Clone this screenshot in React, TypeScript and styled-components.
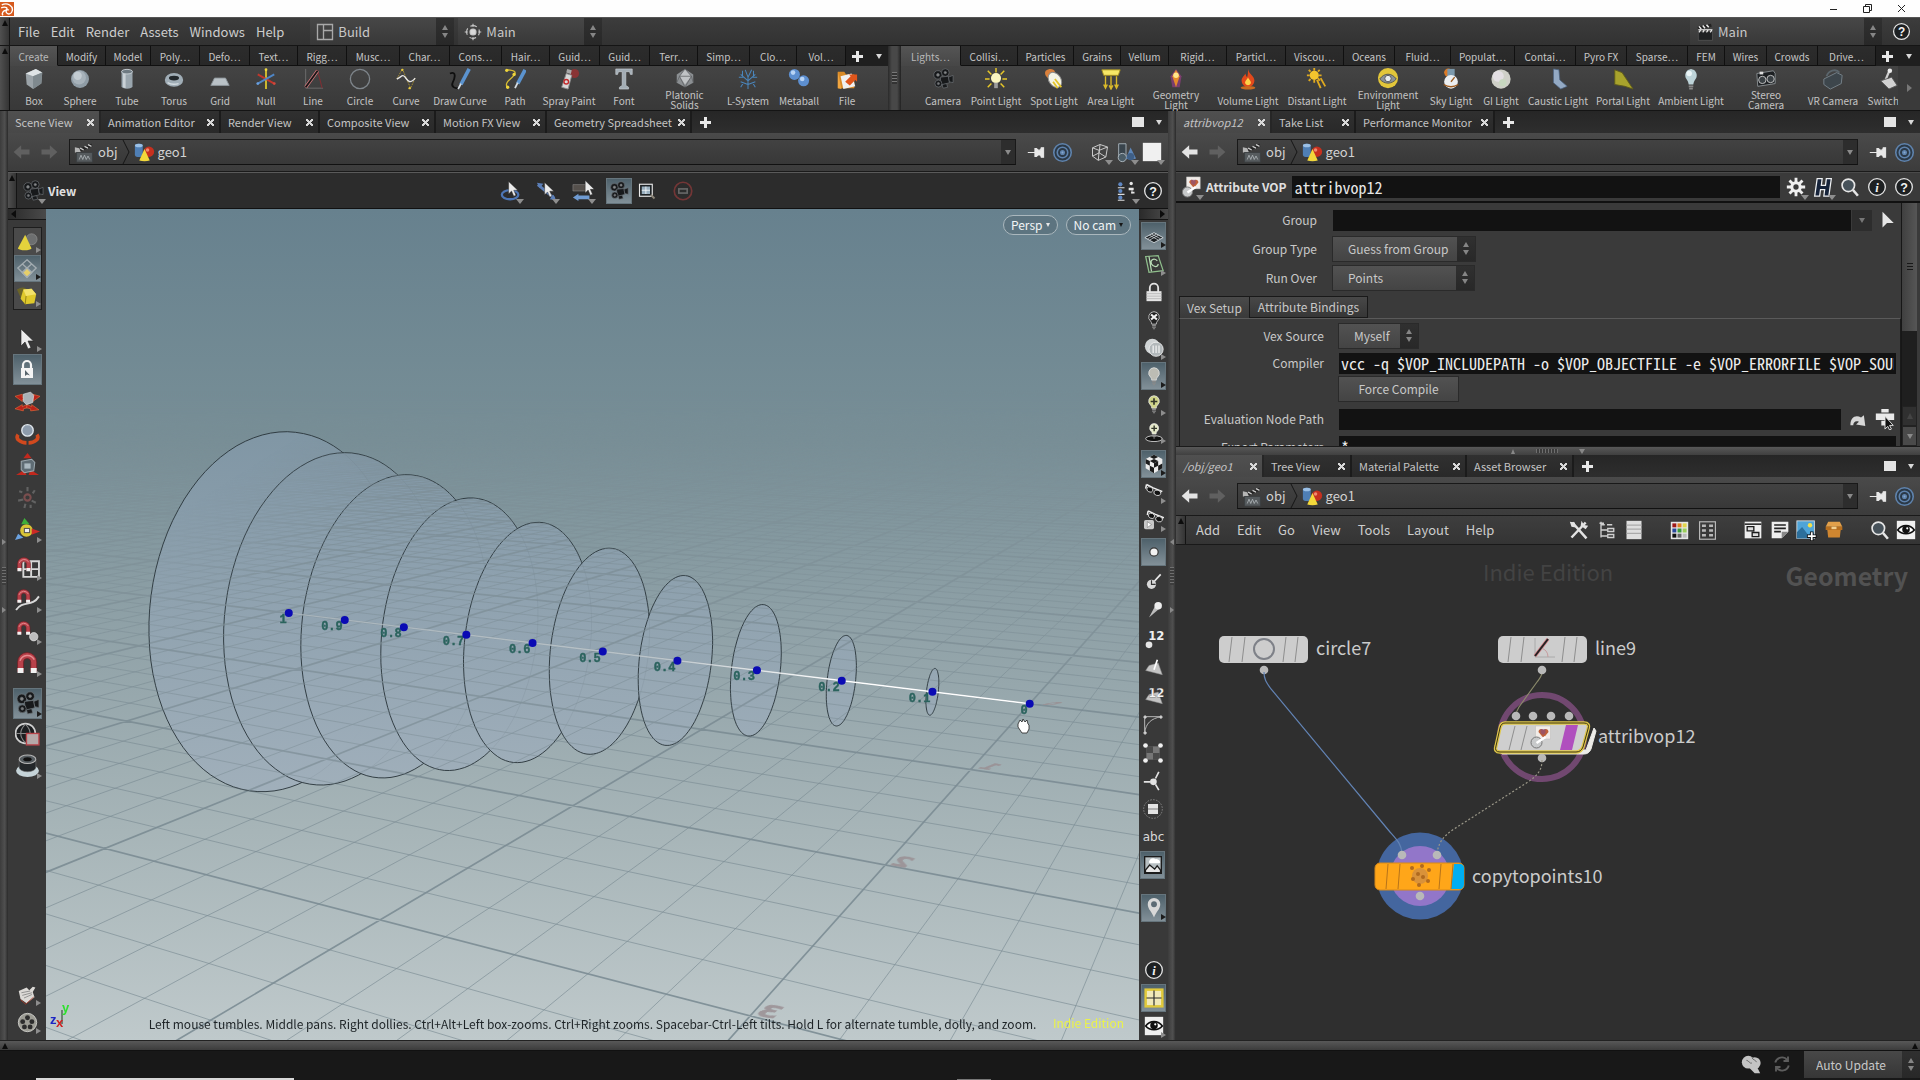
import React from "react";
import styled, { createGlobalStyle, css } from "styled-components";

const SANS = `"Noto Sans CJK SC", "Noto Sans CJK JP", "Open Sans", sans-serif`;
const MONO = `"Noto Sans Mono CJK SC", "Noto Sans Mono CJK JP", "DejaVu Sans Mono", monospace`;

const Global = createGlobalStyle`
  * { box-sizing: border-box; }
  body { margin: 0; background: #181818; color: #c8c8c8; font-family: ${SANS}; font-size: 13px; line-height: 20px; overflow: hidden; }
  button, input, select { font: inherit; color: inherit; margin: 0; padding: 0; border: 0; background: none; border-radius: 0; outline: 0; }
  a { color: inherit; text-decoration: none; }
  svg { display: block; flex: none; }
`;

/* ---------- icons ---------- */

const D = "#3a3a3a";
const camera = (
  <g fill="#17191b" stroke="#70767a" strokeWidth=".7">
    <circle cx="6.500" cy="7.500" r="4.600" /><circle cx="14.500" cy="5" r="4.200" />
    <path d="M9 10l9-1 1 7-9 3z" /><path d="M18 10l5-2v8l-4-1z" />
    <circle cx="7" cy="17" r="3.800" /><path d="M11 18l5-1 1 4-5 1z" /><circle cx="6.500" cy="7.500" r="1.500" fill="#888" /><circle cx="14.500" cy="5" r="1.300" fill="#888" /><circle cx="7" cy="17" r="1.200" fill="#777" />
  </g>
);
const magnet = (
  <g>
    <path d="M3 19V11a8 8 0 0 1 16 0v8h-5v-8a3 3 0 0 0-6 0v8z" fill="#b8414a" stroke="#6e1c22" strokeWidth=".6" />
    <path d="M5 10a6.500 6.500 0 0 1 12-1" fill="none" stroke="#e58a8e" strokeWidth="1.200" />
    <path d="M3 16h5v4H3zM14 16h5v4h-5z" fill="#f2f2f2" />
  </g>
);
const bulb = (fill: string, extra?: React.ReactNode) => (
  <g>
    <path d="M12 2a6.500 6.500 0 0 0-4 11.500c1 1 1 2 1.300 3.500h5.400c.3-1.500.3-2.500 1.300-3.500A6.500 6.500 0 0 0 12 2z" fill={fill} stroke="#e6e6e6" strokeWidth=".9" />
    <path d="M9.700 18.500h4.600M9.700 20.500h4.600M10.700 22.500h2.600" stroke="#8a8a8a" strokeWidth="1.400" />
    {extra}
  </g>
);
const pointer = <path d="M8 2v17l4-4 3 7 3-1.300-3-6.700h5.500z" fill="#ececec" stroke="#222" strokeWidth=".6" />;
const wedge = <path d="M6 1v21l6-6h9z" fill="#e6e6e6" />;
const glasses = (
  <g>
    <path d="M3 3l8 4 10 4-2 2M3 3l-1 5" stroke="#f0f0f0" strokeWidth="1.800" fill="none" />
    <ellipse cx="7" cy="9" rx="3.800" ry="3" fill="#111" stroke="#ddd" transform="rotate(25 7 9)" />
    <ellipse cx="16" cy="13" rx="4.200" ry="3.200" fill="#111" stroke="#ddd" transform="rotate(15 16 13)" />
  </g>
);
const redArrows = (
  <g fill="#b9231a" stroke="#e36a3a" strokeWidth=".6">
    <path d="M0 7l7-2v3l4-1v3l-4 0v2z" /><path d="M24 7l-7-2v3l-4-1v3l4 0v2z" />
    <path d="M0 19l7-4v2l4-2 1 3-4 1v2z" /><path d="M23 20l-7-5v2l-4-2-1 3 4 1v2z" />
  </g>
);
const info = (ch: string, italic?: boolean) => (
  <g>
    <circle cx="12" cy="12" r="10" fill="#1d2022" stroke="#e4e4e4" strokeWidth="1.600" />
    <text x="12" y="17.500" textAnchor="middle" fontSize="15" fontWeight="700" fontStyle={italic ? "italic" : "normal"} fontFamily={italic ? "Liberation Serif, serif" : "Liberation Sans, sans-serif"} fill="#f2f2f2">{ch}</text>
  </g>
);
const pane = (fill: string) => <path d="M6 9l11-3 5 14-20-5z" fill={fill} stroke="#8b8b8b" strokeWidth=".6" />;

const ICONS: Record<string, React.ReactNode> = {
  houdini: (
    <g>
      <rect width="24" height="24" fill="#d65a1e" />
      <path d="M3 5c10-5 20 2 18 10-1 6-8 7-10 3s2-6 4-4" fill="none" stroke="#fff" strokeWidth="2.400" />
      <path d="M2 10c8-3 13 1 8 4-4 1-8 5-5 9" fill="none" stroke="#fff" strokeWidth="2.400" />
    </g>
  ),
  layout: <path d="M2 2h20v20H2zM10 2v20M10 10h12M10 22" fill="none" stroke="#a8a8a8" strokeWidth="1.800" />,
  radial: (
    <g fill="none" stroke="#c8c8c8" strokeWidth="1.500">
      <circle cx="12" cy="12" r="8.500" strokeDasharray="9 4.300" strokeDashoffset="4.500" /><circle cx="12" cy="12" r="4" fill="#d8d8d8" />
      <path d="M12 1v4M12 19v4M1 12h4M19 12h4" />
    </g>
  ),
  clapper: (
    <g>
      <rect x="3" y="11" width="19" height="12" fill="#1f2123" stroke="#555" />
      <path d="M2 5l18-4 1 4L3 9z" fill="#222" /><path d="M4 4.500l3 3.500M9 3.400l3 3.500M14 2.300l3 3.500" stroke="#eee" strokeWidth="2" />
      <path d="M3 9h19M6 9.500l-2 3M11 9.500l-2 3M16 9.500l-2 3M21 9.500l-2 3" stroke="#eee" strokeWidth="1.500" />
    </g>
  ),
  objnet: (
    <g>
      <path d="M3 9L20 2l1 3L4 12z" fill="#222" /><path d="M7 7l4 2M12 5l4 2M16 3l4 2" stroke="#ccc" strokeWidth="1.400" />
      <path d="M1 6l5 1 2 5H1z" fill="#b5b5b5" /><rect x="3" y="12" width="18" height="11" fill="#565b5e" stroke="#3c3f41" />
      <path d="M6 20l2-5 2 5 2-5 2 5 2-4 2 4" stroke="#aab0b4" fill="none" />
    </g>
  ),
  shapes: (
    <g>
      <rect x="1" y="2" width="9" height="15" rx="3" fill="#4f7fb5" /><ellipse cx="5.500" cy="4" rx="4.500" ry="2" fill="#9bc0e6" />
      <circle cx="17" cy="11" r="6" fill="#c5301f" /><circle cx="15.500" cy="9" r="2" fill="#f08a70" />
      <path d="M12 8l6 13a9 3 0 0 1-12 0z" fill="#f3d83b" />
    </g>
  ),
  back: <path d="M2 12l9-8v5h10v6H11v5z" fill="currentColor" />,
  fwd: <path d="M22 12l-9-8v5H3v6h10v5z" fill="currentColor" />,
  pin: <path d="M1 12h9M10 7v10h2l2-2h3l1 3h3V6h-3l-1 3h-3l-2-2z" fill="#e8e8e8" stroke="#e8e8e8" strokeWidth="1.300" />,
  target: (
    <g fill="none" stroke="#5f83ad" strokeWidth="1.800">
      <circle cx="12" cy="12" r="10" fill="#2b3947" /><circle cx="12" cy="12" r="6" /><circle cx="12" cy="12" r="2" fill="#86a8cc" />
    </g>
  ),
  wirecube: <path d="M3 7l9-4 9 3-2 12-9 4-7-5zM3 7l8 3 10-4M11 10l-1 12M12 3l-1 10-8 4M11 13l8 5" fill="none" stroke="#c9c9c9" strokeWidth="1.200" />,
  spheres: (
    <g>
      <path d="M4 3h8v14H4z" fill="#39444c" stroke="#a9b4bb" /><circle cx="8" cy="18" r="4.500" fill="#4b5c66" stroke="#b3bdc4" />
      <path d="M17 7l6 12a8 3 0 0 1-11 0z" fill="#5d86b8" /><circle cx="17" cy="17" r="4" fill="#3f5f86" />
    </g>
  ),
  square: <rect x="1" y="1" width="22" height="22" fill="#f0f0f0" />,
  box: <g><path d="M3 6l11-5 7 4-1 12-9 6-7-5z" fill="#9ba3a8" /><path d="M3 6l8 3 10-4-7-4z" fill="#dfe4e6" /><path d="M11 9l0 14 9-6 1-12z" fill="#7f898e" /></g>,
  sphere: <g><circle cx="12" cy="12" r="9.800" fill="#8f9ca5" /><circle cx="11" cy="10.500" r="7.500" fill="#a7b2ba" /><circle cx="9.500" cy="8.500" r="4.500" fill="#c3ccd2" /></g>,
  tube: <g><path d="M6 4v16a6 2.500 0 0 0 12 0V4z" fill="#9aa6ae" /><path d="M7.500 5v16l3 1V5z" fill="#c9d1d6" /><ellipse cx="12" cy="4" rx="6" ry="2.500" fill="#6e7a82" stroke="#c9d1d6" /></g>,
  torus: <g><ellipse cx="12" cy="13" rx="10" ry="7.500" fill="#a0adb6" /><ellipse cx="12" cy="11" rx="5.500" ry="2.500" fill="#22282c" /><path d="M5 16a9 4 0 0 0 12 1" stroke="#d5dde2" fill="none" strokeWidth="1.500" /></g>,
  grid: <path d="M6 11h12l4 8H2z" fill="#b9c1c6" stroke="#8d969b" />,
  null: <g strokeWidth="2"><path d="M12 1v22" stroke="#d8c22e" /><path d="M3 7l18 10" stroke="#c2362c" /><path d="M21 7L3 17" stroke="#4f86c6" /><circle cx="12" cy="1.800" r="1.500" fill="#f0da40" /><circle cx="3" cy="17" r="1.500" fill="#6aa0e0" /><circle cx="21" cy="17" r="1.500" fill="#d0483c" /></g>,
  line: <g><path d="M4 1v21h19" stroke="#6e6e6e" fill="none" /><path d="M4 21L17 3l5 19" stroke="#7d2f33" fill="none" strokeWidth="1.200" /><path d="M4 21L17 3" stroke="#d77a7e" strokeWidth="3.600" /><path d="M4 21L17 3" stroke="#161616" strokeWidth="2" /></g>,
  circle: <circle cx="12" cy="12" r="10.500" fill="none" stroke="#7e858b" strokeWidth="1.400" />,
  curve: <g fill="none"><path d="M2 12L8 1l9 21 5-11" stroke="#a88f33" strokeDasharray="2 1" /><path d="M2 12c5-2 6-6 9-2s5 8 11 1" stroke="#e6e6e6" strokeWidth="1.500" /><circle cx="8" cy="2" r="1.300" fill="#e8c93a" /><circle cx="16" cy="22" r="1.300" fill="#e8c93a" /></g>,
  drawcurve: <g fill="none"><path d="M1 6c8-3 5 6 3 10s2 7 8 6" stroke="#0f0f0f" strokeWidth="2" /><path d="M22 1L13 18" stroke="#5b93cf" strokeWidth="4" /><path d="M13 17l-3 6" stroke="#d5dce2" strokeWidth="2" /></g>,
  path: <g fill="none"><path d="M3 2c9 0 12 3 6 8s-8 8-5 12" stroke="#d6bb32" strokeWidth="1.400" /><path d="M23 2l-8 15" stroke="#5b93cf" strokeWidth="4" /><path d="M15 16l-3 6" stroke="#d5dce2" strokeWidth="2" /><g fill="#f0d63c"><circle cx="3" cy="2.500" r="1.800" /><circle cx="11" cy="7" r="1.800" /><circle cx="4" cy="21" r="1.800" /></g></g>,
  spray: <g><circle cx="18" cy="6" r="5" fill="#c4282a" opacity=".55" /><path d="M9 6l6 2-4 15-7-2z" fill="#d8d8d8" stroke="#8b8b8b" /><path d="M10 1l5 1.500-1 4-5-1.500z" fill="#a9a9a9" /><circle cx="9" cy="15" r="2.500" fill="none" stroke="#c4282a" strokeWidth="1.500" /></g>,
  font: <path d="M3 1h18v6h-2l-1-3h-4v15l3 2v2H7v-2l3-2V4H6L5 7H3z" fill="#a3adb5" stroke="#d5dbe0" strokeWidth=".6" />,
  platonic: <g><path d="M12 1l9 6v9l-9 5-9-5V7z" fill="#8b8f92" /><path d="M12 1L6 9l6 9 7-9z" fill="#c0c3c5" /><path d="M12 1L6 9h13zM6 9l6 12 7-12M3 16l3-7M21 16l-2-7" fill="none" stroke="#5c5f61" strokeWidth=".8" /></g>,
  lsystem: <path d="M12 23V9M12 14L4 7M12 14l8-7M12 10L9 2M12 10l4-8M7 10H2M17 10h5M12 18l-8-3M12 18l8-3M6 8.500L6 3M18 8.500V3M7 16l-3 5M17 16l3 5" stroke="#4a86bd" strokeWidth="1.100" fill="none" />,
  metaball: <g><circle cx="7" cy="7" r="6" fill="#5d8fd0" /><circle cx="17" cy="14" r="6" fill="#5d8fd0" /><circle cx="5.500" cy="5" r="2.500" fill="#b7d3f5" /><circle cx="15.500" cy="12" r="2.500" fill="#b7d3f5" /></g>,
  file: <g><path d="M2 4h7l2 3h9v15H2z" fill="#d98a26" /><path d="M5 9l12-3 4 14-13 3z" fill="#f0f0f0" /><path d="M2 4l4 19-4-1z" fill="#f2a640" /><path d="M10 15l6-6-2-2h9v8l-2-2-6 6z" fill="#e0551b" /></g>,
  camera,
  pointlight: <g><g stroke="#e8c828" strokeWidth="1.600"><path d="M12 0v5M0 12h5M19 12h5M3 3l4 4M21 3l-4 4M3 21l4-4M21 21l-4-4" /></g><circle cx="12" cy="11" r="5.500" fill="#fbf6c0" /><rect x="10" y="16" width="4" height="6" fill="#9b9b9b" /></g>,
  spotlight: <g><path d="M3 3c4-3 9-2 10 1l-6 8C3 10 1 6 3 3z" fill="#d9803c" /><ellipse cx="13" cy="13" rx="6.500" ry="9" fill="#f4f3e4" stroke="#8b8b8b" transform="rotate(-35 13 13)" /><path d="M13 12l7 9M11 15l5 7" stroke="#e3c32a" strokeWidth="2" /></g>,
  arealight: <g><path d="M2 2h20l-2 6H4z" fill="#f6e766" stroke="#a89220" /><path d="M6 9v12M12 9v13M18 9v12M4 18l2 4 2-4M10 19l2 4 2-4M16 18l2 4 2-4" stroke="#d9b92a" strokeWidth="1.500" fill="none" /></g>,
  geolight: <g><path d="M12 1l6 8-2 12H8L6 9z" fill="#8a3d7a" opacity=".8" /><path d="M12 2l4 7-4 12-4-12z" fill="#e58b2a" /><circle cx="12" cy="8" r="3" fill="#ffe58a" /></g>,
  volumelight: <g><path d="M12 1c1 6 7 7 7 13a7 7 0 0 1-14 0c0-4 3-5 4-8 1 2 1 3 2 4 1-3 1-5 1-9z" fill="#e2491b" /><path d="M12 10c1 3 4 4 3 7a3.500 3.500 0 0 1-6 0c-1-3 2-4 3-7z" fill="#ffd247" /><ellipse cx="12" cy="21.500" rx="8" ry="2" fill="#c96a1f" /></g>,
  distantlight: <g><circle cx="9" cy="8" r="5" fill="#f3c52e" /><g stroke="#e0aa1f" strokeWidth="2"><path d="M9 0v3M9 13v3M1 8h3M14 8h3M3 2l2 2M15 2l-2 2M3 14l2-2M12 13l4 9M16 11l5 9M13 11l2 3" /></g></g>,
  envlight: <g><circle cx="12" cy="11" r="11" fill="#e2c63a" /><path d="M3 12c5-7 13-7 18 0-5 6-13 6-18 0z" fill="#8c9296" stroke="#4e5254" /><circle cx="12" cy="11.500" r="3.500" fill="#e9eef0" stroke="#555" /></g>,
  skylight: <g><circle cx="9" cy="5" r="4.500" fill="#dc7a26" /><path d="M8 1h8v10H8z" fill="#7c99ac" /><circle cx="12" cy="15" r="7.500" fill="#eceef0" /><path d="M4 18c5 3 11 3 16 0M12 15l4-5" stroke="#9c5a1e" fill="none" strokeWidth="1.500" /></g>,
  gilight: <g><circle cx="12" cy="12" r="10.500" fill="#cfd0c8" /><circle cx="9" cy="9" r="6" fill="#e3dfe3" /><circle cx="14" cy="16" r="4" fill="#c8d8c0" /></g>,
  caustic: <path d="M7 1l6 1 1 11 8 7-7 3-8-7z" fill="#93a9c4" stroke="#4a6180" strokeWidth=".8" />,
  portal: <path d="M3 2l8 3 12 18-9-3-11-2z" fill="#a8a32c" stroke="#5e5b1a" />,
  ambient: <g><path d="M12 1a7 7 0 0 0-5 11c2 3 2 4 2.500 6h5c.5-2 .5-3 2.500-6a7 7 0 0 0-5-11z" fill="#bdd3d8" /><circle cx="10" cy="6" r="3" fill="#eaf4f6" /><path d="M9.500 20h5M10 22.500h4" stroke="#8a8a8a" strokeWidth="2" /></g>,
  stereo: <g><path d="M2 6l18-3 2 3v11l-19 3z" fill="#1d2023" stroke="#8b9194" /><circle cx="8" cy="13" r="4" fill="#3a4044" stroke="#c8c8c8" /><circle cx="17" cy="12" r="4" fill="#3a4044" stroke="#c8c8c8" /><rect x="5" y="4" width="4" height="3" fill="#ddd" /></g>,
  vr: <g><path d="M2 12l14-7 6 3-1 9-12 6-7-5z" fill="#3d464c" stroke="#77838b" /><path d="M5 9c2-6 10-9 14-4" fill="none" stroke="#5b666d" strokeWidth="2" /></g>,
  switcher: <g><path d="M14 2l-6 14" stroke="#cfcfcf" strokeWidth="2.500" /><circle cx="14" cy="3" r="2.500" fill="#eee" /><path d="M4 14l12-4 6 9-9 4z" fill="#d2d2d2" stroke="#555" /></g>,
  viewOrbit: <g><ellipse cx="11" cy="16" rx="9" ry="5" fill="none" stroke="#4d76b5" strokeWidth="2.500" /><g transform="translate(3 0) scale(.8)">{pointer}</g></g>,
  viewPan: <g><path d="M2 5l18 15" stroke="#5c7fb8" strokeWidth="3" /><path d="M1 3l7 1-4 5zM22 22l-7-1 4-5z" fill="#5c7fb8" /><g transform="translate(3 1) scale(.8)">{pointer}</g></g>,
  viewDolly: <g><path d="M1 5h14v7H1z" fill="#55504c" stroke="#999" strokeWidth=".5" /><path d="M1 19l6-4v2h12v4H7v2z" fill="#6f9bd2" /><g transform="translate(8 -1) scale(.8)">{pointer}</g></g>,
  zoomFrame: <g><rect x="2" y="3" width="17" height="16" fill="#1e2326" stroke="#ececec" strokeWidth="1.500" /><rect x="5" y="6" width="11" height="10" fill="#9ab0c0" /><path d="M5 11h11M10.500 6v10" stroke="#fff" /><path d="M17 17l5 5" stroke="#8a8377" strokeWidth="2.500" /></g>,
  stop: <g fill="none" stroke="#733636" strokeWidth="2"><circle cx="12" cy="12" r="10.500" /><rect x="7" y="9.500" width="10" height="5" stroke="#666" /></g>,
  viewOpts: <g><g fill="#5f87c2"><circle cx="4" cy="4" r="2.500" /><circle cx="4" cy="12" r="2.500" /><circle cx="4" cy="20" r="2.500" /></g><path d="M1 8h8M1 16h8M1 23h8" stroke="#ddd" strokeWidth="1.300" /><g transform="translate(14 0)" fill="#e6e6e6"><circle cx="3" cy="3" r="2" /><path d="M0 8h6v3H0zM3 13h4v2H3z" /><path d="M4 11v4" stroke="#e6e6e6" /></g></g>,
  help: info("?"),
  infoIcon: info("i", true),
  primCone: <g><circle cx="17" cy="9" r="6" fill="#6d6f70" stroke="#9b9b9b" strokeWidth=".6" /><path d="M10 4l7 15a8 3 0 0 1-15 0z" fill="#e4d23c" /></g>,
  primGrid: <g fill="none" stroke="#a3acb1" strokeWidth="1.500"><path d="M12 2l10 9-10 10L2 11zM7 6.500l10 9M17 6.500l-10 9" /><path d="M12 11l5 5-5 5-5-5z" fill="#e6cf6a" /></g>,
  primCube: <g><path d="M1 5c4-3 8-3 10-1L7 18z" fill="#6b6428" /><path d="M8 5l9-1 5 6-2 10-10 1-5-6z" fill="#dfc92c" /><path d="M8 5l3 7 11-2-5-6z" fill="#f3e26a" /><path d="M11 12l-1 9" stroke="#8d7d15" /></g>,
  arrow: <g transform="translate(-2 0)">{pointer}</g>,
  wedge,
  lockTool: <g><path d="M8 10V7a4 4 0 0 1 8 0v3" fill="none" stroke="#f4f4f4" strokeWidth="2.200" /><rect x="6" y="10" width="12" height="10" fill="#f4f4f4" /><path d="M10 12v6l2-1.500 3 1z" fill="#56636b" /></g>,
  move: <g>{redArrows}<path d="M8 5l7-2 3 3-1 7-6 2-3-3z" fill="#a9b1b6" stroke="#dfe4e7" strokeWidth=".6" /></g>,
  rotate: <g><path d="M3 13c-3 4 2 8 8 8M21 13c3 4-2 8-8 8" stroke="#d1491e" strokeWidth="3.500" fill="none" /><circle cx="12" cy="9" r="5.500" fill="#8d9bab" stroke="#dfe6ec" strokeWidth="1.300" /></g>,
  scale: <g><path d="M12 0l4 5h-8zM1 21l8-5 2 5zM23 21l-8-5-2 5z" fill="#c2281d" /><path d="M6 8l10-2 3 3-1 8-9 2-3-3z" fill="#5f6c74" stroke="#9aa6ad" /><rect x="9" y="10" width="6" height="5" fill="#aab8c0" /></g>,
  pose: <g stroke="#626262" strokeWidth="2" fill="none"><circle cx="12" cy="12" r="3" stroke="#7a4e4e" /><path d="M12 2v4M4 6l3 1M19 5l-2 3M3 15l5-1M20 17l-4-2M9 22l1-4M15 22v-3" /></g>,
  handle: <g><circle cx="11" cy="13" r="6" fill="#d9c536" /><path d="M9 1l5 6H6z" fill="#3eae3a" /><path d="M24 14l-8 3v-6z" fill="#cc2a26" /><path d="M0 22l3-6 5 4z" fill="#6ba2e0" /><rect x="9" y="11" width="5" height="4" fill="#efefef" stroke="#555" /></g>,
  magGrid: <g><path d="M8 6h15v15H8zM8 13.500h15M15.500 6v15" stroke="#d8d8d8" fill="none" strokeWidth="1.800" /><g transform="scale(.78)">{magnet}</g></g>,
  magCurve: <g><path d="M1 22C8 12 16 20 23 9" stroke="#d8d8d8" fill="none" strokeWidth="1.800" /><g transform="scale(.76)">{magnet}</g></g>,
  magPoint: <g><g transform="scale(.76)">{magnet}</g><circle cx="18" cy="17" r="4" fill="#bdbdbd" stroke="#eee" strokeWidth=".6" /></g>,
  magnet: <g transform="translate(-1 -2) scale(1.150)">{magnet}</g>,
  renderRegion: <g><circle cx="10" cy="11" r="9.500" fill="#1c1e20" stroke="#cfcfcf" strokeWidth="1.600" /><path d="M1 11h18M10 2c-6 6-6 12 0 18M10 2c6 6 6 12 0 18" stroke="#888" fill="none" /><rect x="11" y="11" width="12" height="11" fill="#b5a9a9" stroke="#b8444a" strokeWidth="1.300" /></g>,
  lens: <g><ellipse cx="12" cy="17" rx="11" ry="6" fill="#c5d3d8" /><path d="M4 6v8a8 4 0 0 0 16 0V6z" fill="#23272a" stroke="#777" strokeWidth=".5" /><ellipse cx="12" cy="6" rx="8" ry="4" fill="#555c60" stroke="#b5b5b5" /><ellipse cx="12" cy="6" rx="4" ry="2" fill="#111" /></g>,
  cutter: <g><path d="M2 8l9-4 3 3 4-4 3 1-3 5 2 6-9 7-7-5z" fill="#dcdad6" /><path d="M5 10l10-2M6 13l11-3M8 16l9-4" stroke="#888" /><path d="M4 18l6 5 9-8" stroke="#a33c2a" fill="none" /></g>,
  reel: <g><circle cx="12" cy="12" r="10.500" fill="#9c9c94" stroke="#d0d0cc" /><g fill="#2c2c2c"><circle cx="12" cy="6.500" r="2.800" /><circle cx="17" cy="11" r="2.800" /><circle cx="15" cy="17" r="2.800" /><circle cx="8.500" cy="17" r="2.800" /><circle cx="6.500" cy="11" r="2.800" /></g></g>,
  refPlane: <g><path d="M12 8l11 6-11 6L1 14z" fill="#1b1f22" stroke="#dfe6ea" /><path d="M6.500 11l11 6M17.500 11l-11 6M9 9.500l11 6M15 9.500L4 15.500" stroke="#dfe6ea" strokeWidth=".8" /></g>,
  refC: <g fill="none" stroke="#8fbf8c" strokeWidth="1.500"><path d="M2 3l15-1 6 18-17 2z" /><path d="M16 8c-5-4-9 0-7 4s8 4 8 0M6 3l3 18" stroke="#b8dbb5" /></g>,
  lock: <g><path d="M7 12V7a5 5 0 0 1 10 0v5" fill="none" stroke="#e4e4e4" strokeWidth="2.200" /><rect x="3" y="11" width="18" height="12" fill="#e4e4e4" /><path d="M3 14h18M3 17h18M3 20h18" stroke="#b5b5b5" /></g>,
  bulbX: bulb("#222", <path d="M8.500 5.500l7 6M15.500 5.500l-7 6" stroke="#f2f2f2" strokeWidth="2.500" />),
  headlight: <g><circle cx="10" cy="10" r="9" fill="#cfd3d4" /><circle cx="14.500" cy="13.500" r="8.500" fill="#b2b8ba" stroke="#eee" /><path d="M11 9v9M14.500 9v9M18 9v9" stroke="#f1f1f1" strokeWidth="1.500" /></g>,
  bulb: bulb("#bcbcb4"),
  bulbPlus: bulb("#cfd489", <path d="M12 5v8M8 9h8" stroke="#33362a" strokeWidth="2" />),
  bulbDisk: <g><ellipse cx="12" cy="20" rx="10" ry="3.500" fill="#101010" stroke="#ddd" /><g transform="translate(2 0) scale(.85)">{bulb("#e5e8c8", <path d="M12 5v8M8 9h8" stroke="#33362a" strokeWidth="2" />)}</g></g>,
  checker: <g><path d="M2 6l10-5 10 5v11l-10 6-10-6z" fill="#ececec" /><path d="M2 6l5 2.500V14l-5-2.500zM7 14l5 2.500V23l-5-3zM12 11v5.500l5-2.500V8.500zM17 14v6l5-3v-5.500zM12 1l5 2.500L12 6 7 3.500z" fill="#1b1b1b" /><path d="M7 8.500L12 6l5 2.500-5 2.500z" fill="#1b1b1b" /></g>,
  glasses,
  glassesPlay: <g><g transform="translate(2 -2)">{glasses}</g><rect x="0" y="12" width="12" height="11" rx="2" fill="#c9c9c9" /><path d="M4 14v7l5-3.500z" fill="#fff" stroke="#666" strokeWidth=".6" /></g>,
  pointDisp: <circle cx="12" cy="12" r="5" fill="#f2f2f2" stroke="#333" strokeWidth="1.400" />,
  pointNormal: <g><path d="M10 15L20 4" stroke="#e8e8e8" strokeWidth="2" /><circle cx="9" cy="16" r="5.500" fill="#d9d9d9" /><path d="M9 11v5h5" stroke="#333" fill="none" strokeWidth="1.400" /></g>,
  pointTrail: <g><path d="M6 21L14 6l5 4z" fill="#bdbdbd" /><circle cx="17" cy="7" r="4.500" fill="#ededed" /></g>,
  pointNum: <g><text x="5" y="13" fontSize="14" fontWeight="700" fontFamily="DejaVu Sans, sans-serif" fill="#f0f0f0">12</text><circle cx="6" cy="19" r="4" fill="#e6e6e6" /></g>,
  primNormal: <g>{pane("#c4c4c4")}<path d="M12 14l4-12" stroke="#fff" strokeWidth="2" /></g>,
  primNum: <g>{pane("#c4c4c4")}<text x="5" y="12" fontSize="14" fontWeight="700" fontFamily="DejaVu Sans, sans-serif" fill="#f6f6f6" stroke="#333" strokeWidth=".3">12</text></g>,
  hull: <g fill="none" stroke="#b5b5b5" strokeWidth="1.200"><path d="M2 2v20M2 2h20M2 22C3 10 10 4 22 2" /><g fill="#f0f0f0"><circle cx="2.500" cy="2.500" r="1.500" /><circle cx="21.500" cy="2.500" r="1.500" /><circle cx="2.500" cy="21.500" r="1.500" /></g></g>,
  uvCheck: <g><rect x="4" y="4" width="16" height="16" fill="#777" /><path d="M4 4h8v8H4zM12 12h8v8h-8z" fill="#4a4a4a" /><g fill="#f0f0f0"><circle cx="3" cy="3" r="2.800" /><circle cx="21" cy="3" r="2.800" /><circle cx="3" cy="21" r="2.800" /><circle cx="21" cy="21" r="2.800" /></g></g>,
  axisTri: <g stroke="#e3e3e3" strokeWidth="2"><path d="M1 13h8M15 9l4-8M15 16l4 7" /><circle cx="12.500" cy="13" r="3" fill="#e3e3e3" /></g>,
  onion: <g><circle cx="12" cy="12" r="11.200" fill="none" stroke="#8d8d8d" strokeDasharray="2 1.500" /><rect x="6" y="6" width="12" height="12" fill="#e3e3e3" /><path d="M6 12h12" stroke="#a5a5a5" strokeWidth="2" /></g>,
  bgImage: <g><rect x="2" y="2" width="20" height="20" fill="#b7bfc2" stroke="#1c1c1c" strokeWidth="1.600" /><path d="M3 18l5-6 6 5 3-4 4 5v3H3z" fill="#e8e8e8" stroke="#1c1c1c" strokeWidth="1.500" /><path d="M7 9c0-4 5-7 8-4 4-1 8 5 4 5h-10z" fill="#fff" /></g>,
  mapPin: <g><path d="M12 0a7.500 7.500 0 0 0-7.500 7.500c0 6 5 9 7.500 16 2.500-7 7.500-10 7.500-16a7.500 7.500 0 0 0-7.500-7.500z" fill="#d8d8d8" /><circle cx="12" cy="7.500" r="3.500" fill="#5c6b74" /></g>,
  quad: <g><rect x="2" y="2" width="20" height="20" fill="#f1e9b8" stroke="#e0c93b" strokeWidth="3" /><path d="M12 3v18M3 12h18" stroke="#2a2a2a" strokeWidth="1.400" /></g>,
  eye: <g><rect x="1" y="1" width="22" height="22" fill="#f0f0f0" /><path d="M2 12c5-7 15-7 20 0-5 6-15 6-20 0z" fill="#fff" stroke="#111" strokeWidth="2" /><circle cx="12" cy="11.500" r="4.500" fill="#111" /><circle cx="13.500" cy="10" r="1.300" fill="#fff" /></g>,
  vop: <g><path d="M6 1h15v13H6z" fill="#f1ece8" stroke="#bbb" strokeWidth=".5" /><path d="M14 13L9 7c0-3 3-4 5-2 2-2 5-1 5 2z" fill="#c0613a" /><path d="M11 4h5v4l-2.500 2L11 8z" fill="#7b4a8c" opacity=".5" /><circle cx="7" cy="17.500" r="5.500" fill="#c8cacb" stroke="#777" /><path d="M7 18l9-6" stroke="#fff" strokeWidth="2.500" /></g>,
  gear: <g><g stroke="#efefef" strokeWidth="3.400"><path d="M12 1v22M1 12h22M4.200 4.200l15.600 15.600M19.800 4.200L4.200 19.800" /></g><circle cx="12" cy="12" r="7" fill="#efefef" /><circle cx="12" cy="12" r="3.200" fill={D} /></g>,
  hlogo: <path d="M5 2h6l-1 8h5l1-8h6l-3 21h-6l1-8H9l-1 8H2z" fill="#16233a" stroke="#eef0f2" strokeWidth="1.500" />,
  search: <g><circle cx="10" cy="10" r="7.500" fill="#47525a" stroke="#e6e6e6" strokeWidth="2" /><path d="M15.500 15.500l6 7" stroke="#e6e6e6" strokeWidth="3" /></g>,
  jump: <path d="M2 20C2 9 9 5 17 9l4-3 2 15-13-2 4-4c-5-2-8 1-8 5z" fill="#d8d8d8" />,
  chooser: <g><path d="M8 1h8v4H8zM2 6h20v7H2zM8 14h8v5H8z" fill="#e9e9e9" /><path d="M12 9v14l3-3 2 4 2-1-2-4h4z" fill="#111" stroke="#e9e9e9" /></g>,
  tools: <g><path d="M4 3l17 19M20 3L3 21" stroke="#e3e3e3" strokeWidth="3" /><path d="M15 1l3 5 5 1-3 4-6-4zM1 2l6 1 1 6-5-1z" fill="#e3e3e3" /></g>,
  tree: <path d="M4 1v21M4 5h5M4 12h8M4 20h8M2 3h6M12 5h7M13 10h8v4h-8zM13 18h8v4h-8z" stroke="#d0d0d0" fill="none" strokeWidth="1.800" />,
  list: <g><rect x="3" y="1" width="18" height="22" fill="#dedede" /><path d="M3 6h18M3 11h18M3 16h18" stroke="#aaa" strokeWidth="1.500" /></g>,
  palette: <g><rect x="1" y="1" width="22" height="22" fill="#e6e6e6" /><g><path d="M3 3h5v5H3z" fill="#a01818" /><path d="M9.500 3h5v5h-5z" fill="#e08020" /><path d="M16 3h5v5h-5z" fill="#e3d64a" /><path d="M3 9.500h5v5H3z" fill="#2a4a9a" /><path d="M9.500 9.500h5v5h-5z" fill="#3a9a3a" /><path d="M16 9.500h5v5h-5z" fill="#9ccf5a" /><path d="M3 16h5v5H3z" fill="#111" /><path d="M9.500 16h5v5h-5z" fill="#666" /><path d="M16 16h5v5h-5z" fill="#bbb" /></g></g>,
  shapesPal: <g fill="none" stroke="#b8b8b8" strokeWidth="1.500"><rect x="2" y="1" width="20" height="22" /><path d="M5 6h5M14 6h5M5 12h5M14 12h5M5 18h5M14 18h5" strokeWidth="3" /></g>,
  netbox: <g><rect x="2" y="2" width="20" height="20" fill="#eee" /><path d="M2 5h20" stroke="#333" strokeWidth="2" /><path d="M5 8h8v5H5zM11 15h8v5h-8z" fill="#ddd" stroke="#1b1b1b" strokeWidth="1.600" /></g>,
  sticky: <g><path d="M2 2h20v12l-8 8H2z" fill="#eee" /><path d="M5 6h14M5 10h14M5 14h8" stroke="#222" strokeWidth="2" /><path d="M22 14h-8v8z" fill="#888" /></g>,
  bgAdd: <g><rect x="1" y="1" width="20" height="20" fill="#4fa4d8" stroke="#ddd" /><path d="M1 21V14l6-6 7 9 4-4 3 3v5z" fill="#2c6f9c" /><circle cx="16" cy="6" r="2.500" fill="#f4e04a" /><path d="M18 13v11M12.500 18.500h11" stroke="#111" strokeWidth="4" /><path d="M18 14v9M13.500 18.500h9" stroke="#fff" strokeWidth="2" /></g>,
  crate: <g><path d="M2 8l3-6h14l3 6z" fill="#e2a04a" /><path d="M2 8h20v4H2z" fill="#b86f1e" /><path d="M4 12h16l-1 9H5z" fill="#cf8630" /><path d="M9 8h6v3H9z" fill="#f3cf8e" /></g>,
  brain: <g fill="#c3c3c3"><circle cx="9" cy="10" r="7" /><circle cx="16" cy="11" r="6.500" /><path d="M10 16h9l3 6h-6z" /><path d="M7 8c3 0 3 4 6 3M13 5c1 3 4 2 5 5" stroke="#666" fill="none" /></g>,
  refresh: <g fill="none" stroke="#5d5d5d" strokeWidth="2.500"><path d="M3 10a9 9 0 0 1 16-3M21 14a9 9 0 0 1-16 3" /><path d="M20 2v6h-6M4 22v-6h6" /></g>,
};

const Icon = ({ name, size = 24 }: { name: string; size?: number }) => (
  <svg width={size} height={size} viewBox="0 0 24 24" aria-hidden="true">{ICONS[name]}</svg>
);

/* ---------- shared parts ---------- */

const UpDown = styled.span`
  flex: none; width: 18px; align-self: stretch; display: flex; flex-direction: column; align-items: center; justify-content: center; gap: 3px;
  background: linear-gradient(#303030, #282828); pointer-events: none;
  &::before, &::after { content: ""; border: 3px solid transparent; }
  &::before { border-top: 0; border-bottom: 5px solid #858585; }
  &::after { border-bottom: 0; border-top: 5px solid #858585; }
`;
const Tri = styled.span<{ $dir?: "up" | "down" | "left" | "right"; $c?: string; $s?: number }>`
  display: block; width: 0; height: 0; flex: none;
  border: ${(p) => p.$s ?? 5}px solid transparent;
  ${({ $dir = "down", $c = "#d8d8d8", $s = 5 }) =>
    $dir === "down" ? css`border-bottom: 0; border-top-color: ${$c}; border-top-width: ${$s + 2}px;`
    : $dir === "up" ? css`border-top: 0; border-bottom-color: ${$c}; border-bottom-width: ${$s + 3}px;`
    : $dir === "left" ? css`border-left: 0; border-right-color: ${$c}; border-right-width: ${$s + 1}px;`
    : css`border-right: 0; border-left-color: ${$c}; border-left-width: ${$s + 1}px;`}
`;
const IconBtn = styled.button<{ $on?: boolean; $w?: number; $h?: number; $menu?: "side" | "down" }>`
  position: relative; flex: none; display: flex; align-items: center; justify-content: center;
  width: ${(p) => p.$w ?? 26}px; height: ${(p) => p.$h ?? 26}px;
  ${(p) => p.$on && css`background: linear-gradient(#4c5f69, #84929a); box-shadow: inset 0 0 0 1px #66757d;`}
  ${(p) => p.$menu === "side" && css`&::after { content: ""; position: absolute; right: 0; bottom: 2px; border: 3px solid transparent; border-right: 0; border-left: 5px solid ${p.$on ? "#1c1c1c" : "#8e8e8e"}; }`}
  ${(p) => p.$menu === "down" && css`&::after { content: ""; position: absolute; right: 0; bottom: 0; border: 4px solid transparent; border-bottom: 0; border-top: 5px solid #8e8e8e; }`}
`;
const Stow = styled.button<{ $w?: number }>`
  flex: none; width: ${(p) => p.$w ?? 10}px; align-self: stretch; display: flex; justify-content: center; padding-top: 2px;
  background: linear-gradient(90deg, #505050, #343434); border-right: 1px solid #141414;
`;
const Spacer = styled.span<{ $h?: number; $w?: number }>`flex: ${(p) => (p.$h || p.$w ? "none" : 1)}; width: ${(p) => p.$w ?? 0}px; height: ${(p) => p.$h ?? 0}px;`;

/* ---------- frame ---------- */

const Page = styled.div`display: flex; flex-direction: column; height: 100vh; min-height: 700px; background: #3a3a3a;`;
const TitleBar = styled.header`flex: none; height: 17px; background: #fefefe; display: flex; align-items: center; padding: 0 2px 0 0;`;
const WinBtn = styled.button`width: 34px; height: 17px; display: flex; align-items: center; justify-content: center;`;
const MenuBar = styled.div`flex: none; height: 29px; display: flex; align-items: stretch; background: linear-gradient(#3c3c3c, #323232); border-bottom: 1px solid #151515; border-top: 1px solid #555;`;
const Menus = styled.nav<{ $gap?: number; $pad?: number }>`
  display: flex; align-items: center; gap: ${(p) => p.$gap ?? 11}px; padding-left: ${(p) => p.$pad ?? 7}px; font-size: 13px; color: #cdcdcd;
`;
const PickerWrap = styled.label<{ $w: number }>`
  flex: none; display: flex; align-items: center; width: ${(p) => p.$w}px; background: linear-gradient(#474747, #383838); padding-left: 6px; gap: 4px; font-size: 13px;
  select { appearance: none; flex: 1; min-width: 0; height: 100%; }
`;
const Picker = ({ w, icon, value, label }: { w: number; icon: string; value: string; label: string }) => (
  <PickerWrap $w={w}><Icon name={icon} size={18} /><select aria-label={label}><option>{value}</option></select><UpDown /></PickerWrap>
);

/* ---------- shelf ---------- */

const ShelfRow = styled.div`flex: none; height: 65px; display: grid; grid-template-columns: minmax(0, 888fr) 13px minmax(0, 1019fr); background: #3a3a3a; border-bottom: 1px solid #141414;`;
const ShelfSet = styled.section`display: flex; min-width: 0; flex: 1;`;
const ShelfBody = styled.div`flex: 1; min-width: 0; display: flex; flex-direction: column;`;
const ShelfTabs = styled.div`flex: none; height: 20px; display: flex; background: #1f1f1f;`;
const ShelfTab = styled.button<{ $w: number; $on?: boolean }>`
  flex: none; width: ${(p) => p.$w}px; height: 20px; padding-top: 2px; font-size: 10px; line-height: 17px; color: ${(p) => (p.$on ? "#b9b9b9" : "#c6c6c6")};
  background: ${(p) => (p.$on ? "linear-gradient(#555, #474747)" : "linear-gradient(#2c2c2c, #282828)")};
  border-right: 1px solid #101010; border-bottom: 1px solid ${(p) => (p.$on ? "#474747" : "#101010")}; white-space: nowrap;
`;
const ShelfEnd = styled.button`width: 22px; display: flex; align-items: center; justify-content: center; flex: none;`;
const Plus = styled.span`
  width: 11px; height: 11px; display: block;
  background: linear-gradient(#e8e8e8, #e8e8e8) center / 3px 11px no-repeat, linear-gradient(#e8e8e8, #e8e8e8) center / 11px 3px no-repeat;
`;
const Tools = styled.div<{ $pad?: number }>`flex: 1; min-width: 0; display: flex; padding-left: ${(p) => p.$pad ?? 1}px; overflow-x: clip; background: linear-gradient(#444, #383838);`;
const ToolBtn = styled.button<{ $w: number; $two?: boolean }>`
  flex: none; width: ${(p) => p.$w}px; height: 44px; display: flex; flex-direction: column; align-items: center; padding-top: 2px;
  font-size: 10px; line-height: ${(p) => (p.$two ? 10 : 22)}px; color: #c4c4c4; white-space: pre; text-align: center;
`;
const Grip = styled.div`
  background: linear-gradient(90deg, #2a2a2a, #484848 30%, #484848 70%, #222); display: flex; align-items: center; justify-content: center;
  &::before { content: ""; width: 5px; height: 12px; background: repeating-linear-gradient(#777 0 1px, #333 1px 3px); }
`;

type ToolDef = [string, string, number];
const createTools: ToolDef[] = [
  ["Box", "box", 46], ["Sphere", "sphere", 46], ["Tube", "tube", 48], ["Torus", "torus", 46], ["Grid", "grid", 46], ["Null", "null", 46],
  ["Line", "line", 48], ["Circle", "circle", 46], ["Curve", "curve", 46], ["Draw Curve", "drawcurve", 62], ["Path", "path", 48],
  ["Spray Paint", "spray", 60], ["Font", "font", 50], ["Platonic\nSolids", "platonic", 71], ["L-System", "lsystem", 56], ["Metaball", "metaball", 46], ["File", "file", 50],
];
const lightTools: ToolDef[] = [
  ["Camera", "camera", 48], ["Point Light", "pointlight", 58], ["Spot Light", "spotlight", 58], ["Area Light", "arealight", 56], ["Geometry\nLight", "geolight", 74],
  ["Volume Light", "volumelight", 70], ["Distant Light", "distantlight", 68], ["Environment\nLight", "envlight", 74], ["Sky Light", "skylight", 52], ["GI Light", "gilight", 48],
  ["Caustic Light", "caustic", 66], ["Portal Light", "portal", 64], ["Ambient Light", "ambient", 72], ["Stereo\nCamera", "stereo", 78], ["VR Camera", "vr", 56], ["Switcher", "switcher", 54],
];
const createTabs: [string, number][] = [
  ["Create", 48], ["Modify", 48], ["Model", 45], ["Poly…", 49], ["Defo…", 50], ["Text…", 48], ["Rigg…", 49], ["Musc…", 53], ["Char…", 50],
  ["Cons…", 52], ["Hair…", 48], ["Guid…", 50], ["Guid…", 50], ["Terr…", 48], ["Simp…", 52], ["Clo…", 47], ["Vol…", 49],
];
const lightTabs: [string, number][] = [
  ["Lights…", 60], ["Collisi…", 57], ["Particles", 56], ["Grains", 47], ["Vellum", 48], ["Rigid…", 58], ["Particl…", 59], ["Viscou…", 58], ["Oceans", 51],
  ["Fluid…", 56], ["Populat…", 64], ["Contai…", 61], ["Pyro FX", 51], ["Sparse…", 61], ["FEM", 37], ["Wires", 42], ["Crowds", 51], ["Drive…", 58],
];

const Shelf = ({ tabs, tools, pad, more }: { tabs: [string, number][]; tools: ToolDef[]; pad?: number; more?: boolean }) => (
  <ShelfBody>
    <ShelfTabs>
      {tabs.map(([t, w], i) => <ShelfTab key={i} $w={w} $on={i === 0}>{t}</ShelfTab>)}
      <ShelfEnd aria-label="Add shelf"><Plus /></ShelfEnd>
      <ShelfEnd aria-label="Shelf menu"><Tri $s={3} /></ShelfEnd>
    </ShelfTabs>
    <ShelfSet>
      <Tools $pad={pad}>
        {tools.map(([t, icon, w]) => <ToolBtn key={t} $w={w} $two={t.includes("\n")}><Icon name={icon} size={22} />{t}</ToolBtn>)}
      </Tools>
      {more && <ShelfEnd aria-label="More tools"><Tri $dir="right" $c="#777" $s={4} /></ShelfEnd>}
    </ShelfSet>
  </ShelfBody>
);

/* ---------- panes ---------- */

const Main = styled.main`flex: 1; min-height: 0; display: grid; grid-template-columns: 8px minmax(0, 1160fr) 8px minmax(0, 744fr); background: #3a3a3a;`;
const Splitter = styled.div`
  background: linear-gradient(90deg, #3c3c3c, #505050 60%, #2a2a2a); display: flex; flex-direction: column; align-items: center; justify-content: center; gap: 22px;
  i { width: 4px; height: 18px; background: repeating-linear-gradient(#6f6f6f 0 1px, #3d3d3d 1px 3px); }
`;
const Column = styled.div`min-width: 0; min-height: 0; display: flex; flex-direction: column;`;
const PaneTabs = styled.div`flex: none; height: 22px; display: flex; background: linear-gradient(#262626, #2e2e2e); padding-right: 4px;`;
const PaneTab = styled.div<{ $w: number; $on?: boolean }>`
  flex: none; width: ${(p) => p.$w}px; display: flex; align-items: center; justify-content: space-between; padding: 0 5px 0 7px;
  background: ${(p) => (p.$on ? "linear-gradient(#505050, #484848)" : "linear-gradient(#303030, #292929)")};
  border-right: 2px solid ${(p) => (p.$on ? "#262626" : "#1b1b1b")}; font-size: 11px; line-height: 20px; white-space: nowrap; color: #c4c4c4;
`;
const TabName = styled.button<{ $italic?: boolean }>`font-style: ${(p) => (p.$italic ? "italic" : "normal")};`;
const Close = styled.button`
  width: 7px; height: 7px;
  background: linear-gradient(45deg, transparent 38%, #d8d8d8 38% 62%, transparent 62%), linear-gradient(-45deg, transparent 38%, #d8d8d8 38% 62%, transparent 62%);
`;
const Max = styled.button`width: 12px; height: 10px; background: #e4e4e4; align-self: center; margin-right: 10px;`;
const AddTab = styled.button`padding: 0 8px; display: flex; align-items: center;`;
const PaneMenu = styled.button`display: flex; align-items: center; padding: 0 2px;`;

const TabStrip = ({ tabs, italic }: { tabs: [string, number][]; italic?: boolean }) => (
  <PaneTabs>
    {tabs.map(([t, w], i) => (
      <PaneTab key={t} $w={w} $on={i === 0}><TabName $italic={italic && i === 0}>{t}</TabName><Close aria-label={`Close ${t}`} /></PaneTab>
    ))}
    <AddTab aria-label="New tab"><Plus /></AddTab>
    <Spacer />
    <Max aria-label="Maximize pane" />
    <PaneMenu aria-label="Pane menu"><Tri $s={3} /></PaneMenu>
  </PaneTabs>
);

const PathRow = styled.div`flex: none; height: 39px; display: flex; align-items: center; padding: 0 3px 0 0; background: linear-gradient(#4a4a4a, #3c3c3c); border-bottom: 1px solid #1a1a1a;`;
const NavBtn = styled.button<{ $dim?: boolean }>`flex: none; width: 27px; height: 24px; display: flex; justify-content: center; align-items: center; color: ${(p) => (p.$dim ? "#606060" : "#e4e4e4")};`;
const PathField = styled.div`
  flex: 1; min-width: 0; height: 26px; display: flex; align-items: center; border: 1px solid #191919; border-bottom-color: #111; background: linear-gradient(#424242, #383838);
  margin: 0 7px; font-size: 13px;
`;
const Crumb = styled.a`display: flex; align-items: center; gap: 3px; padding: 0 4px; color: #d2d2d2;`;
const DropBtn = styled.button<{ $w?: number; $h?: number }>`flex: none; width: ${(p) => p.$w ?? 14}px; height: ${(p) => p.$h ?? 24}px; display: flex; align-items: center; justify-content: center; background: #2d2d2d;`;

const PathBar = ({ dimBack, children }: { dimBack?: boolean; children?: React.ReactNode }) => (
  <PathRow>
    <NavBtn $dim={dimBack} aria-label="Back"><Icon name="back" size={20} /></NavBtn>
    <NavBtn $dim aria-label="Forward"><Icon name="fwd" size={20} /></NavBtn>
    <PathField>
      <Crumb href="#obj"><Icon name="objnet" size={21} />obj</Crumb>
      <svg width="8" height="24" aria-hidden="true"><path d="M1 0l6 12-6 12" fill="none" stroke="#161616" /></svg>
      <Crumb href="#geo1"><Icon name="shapes" size={21} />geo1</Crumb>
      <Spacer />
      <DropBtn aria-label="Path history"><Tri $c="#8a8a8a" $s={3} /></DropBtn>
    </PathField>
    <IconBtn aria-label="Pin" $w={27}><Icon name="pin" size={19} /></IconBtn>
    <IconBtn aria-label="Link" $w={25}><Icon name="target" size={21} /></IconBtn>
    {children}
  </PathRow>
);

const OpBar = styled.div`flex: none; height: 37px; display: flex; align-items: center; background: #2c2c2c; border-top: 1px solid #5a5a5a; border-bottom: 1px solid #111; padding-right: 2px;`;
const OpName = styled.strong`font-size: 12px; color: #e0e0e0; margin-left: 2px; white-space: nowrap;`;
const OpGroup = styled.div`flex: 1; display: flex; justify-content: center; gap: 10px; align-items: center; padding-left: 4px;`;
const Pair = styled.div`display: flex; align-items: center; gap: 2px;`;
const SceneBody = styled.div`flex: 1; min-height: 0; display: grid; grid-template-columns: 38px minmax(0, 1fr) 29px;`;
const Side = styled.div`display: flex; flex-direction: column; align-items: center; background: #393939; min-height: 0; overflow: hidden;`;
const SideHead = styled.button<{ $end?: boolean }>`
  flex: none; width: 100%; height: 11px; display: flex; align-items: center; padding: 0 3px; justify-content: ${(p) => (p.$end ? "flex-end" : "flex-start")};
  background: linear-gradient(90deg, #2a2a2a, #4a4a4a); border-bottom: 1px solid #151515;
`;
const SideSet = styled.div<{ $gap?: number; $boxed?: boolean; $mt?: number }>`
  flex: none; display: flex; flex-direction: column; gap: ${(p) => p.$gap ?? 0}px; margin-top: ${(p) => p.$mt ?? 0}px;
  ${(p) => p.$boxed && css`background: #4a4a4a; box-shadow: 0 0 0 1px #1d1d1d;`}
`;

type SideDef = [string, string, boolean?, boolean?];
const Buttons = ({ items, h, w = 27, size = 22 }: { items: SideDef[]; h: number; w?: number; size?: number }) => (
  <>{items.map(([icon, label, on, menu]) => <IconBtn key={label} aria-label={label} $on={on} $w={w} $h={h} $menu={menu ? "side" : undefined}><Icon name={icon} size={size} /></IconBtn>)}</>
);

/* ---------- 3D viewport ---------- */

const Viewport = styled.div`position: relative; min-width: 0; overflow: hidden; background: #9aabb0; > svg { position: absolute; inset: 0; width: 100%; height: 100%; }`;
const CamMenus = styled.div`position: absolute; top: 6px; right: 8px; display: flex; gap: 8px;`;
const Pill = styled.button`
  height: 20px; padding: 0 7px; border-radius: 10px; border: 1px solid #aab7bd; background: rgba(80, 100, 110, .45); color: #f2f4f5; font-size: 12px; line-height: 18px; display: flex; align-items: center; gap: 3px;
`;
const Hint = styled.p`position: absolute; left: 0; right: 0; bottom: 6px; margin: 0; text-align: center; font-size: 12px; color: #1d2326; white-space: nowrap;`;
const Edition = styled.span`position: absolute; right: 15px; bottom: 7px; color: #eaf24a; font-size: 12px;`;

// Perspective of the construction plane: u runs along the line, z towards the viewer, y is up.
const project = (u: number, z: number, y = 0): [number, number] => {
  const k = 0.0384;
  const w = 1 + 0.3596 * u - 0.1552 * z - k * y;
  return [(1029.7 - 637.1 * u - 209.6 * z - 624 * k * y) / w, (703.7 + 129.9 * u - 53.6 * z - 6844 * k * y) / w];
};
const UNIT = 0.2555;
const seg = (a: [number, number], b: [number, number]) => `M${a[0].toFixed(1)} ${a[1].toFixed(1)}L${b[0].toFixed(1)} ${b[1].toFixed(1)}`;
const buildGrid = () => {
  let major = "", minor = "";
  for (let i = -110; i <= 300; i++) {
    const isMajor = i % 5 === 0;
    const u = (i / 5) * UNIT;
    const zNear = (0.92 + 0.3596 * u) / 0.1552;
    if (zNear > -60) {
      const d = seg(project(u, zNear), project(u, -60));
      if (isMajor) major += d; else minor += d;
    }
  }
  for (let j = -180; j <= 60; j++) {
    const isMajor = j % 5 === 0;
    const z = j / 5;
    const uNear = (0.1552 * z - 0.92) / 0.3596;
    const d = seg(project(uNear, z), project(24, z));
    if (isMajor) major += d; else minor += d;
  }
  return { major, minor };
};
const GRID = buildGrid();
const ring = (u: number) => {
  const pts: string[] = [];
  for (let i = 0; i < 96; i++) {
    const t = (i / 96) * Math.PI * 2;
    const [x, y] = project(u, 1.015 * u * Math.cos(t), u * Math.sin(t));
    pts.push(`${x.toFixed(1)} ${y.toFixed(1)}`);
  }
  return `M${pts.join("L")}Z`;
};
const STEPS = [1, 0.9, 0.8, 0.7, 0.6, 0.5, 0.4, 0.3, 0.2, 0.1];

const Scene = () => (
  <svg viewBox="46 209 1093 831" preserveAspectRatio="xMidYMid slice" role="img" aria-label="Perspective view of circles copied along a line">
    <defs>
      <linearGradient id="sky" gradientUnits="userSpaceOnUse" x1="0" y1="209" x2="0" y2="1040">
        <stop offset="0" stopColor="#67818e" /><stop offset=".28" stopColor="#788f97" /><stop offset=".5" stopColor="#8fa1a7" /><stop offset=".75" stopColor="#a7b5b8" /><stop offset="1" stopColor="#bfc9cb" />
      </linearGradient>
      <linearGradient id="disc" gradientUnits="userSpaceOnUse" x1="0" y1="430" x2="0" y2="790">
        <stop offset="0" stopColor="#8197a6" /><stop offset="1" stopColor="#a0afbb" />
      </linearGradient>
      <linearGradient id="fade" gradientUnits="userSpaceOnUse" x1="0" y1="390" x2="0" y2="720"><stop offset="0" stopColor="#000" /><stop offset=".3" stopColor="#666" /><stop offset="1" stopColor="#fff" /></linearGradient>
      <linearGradient id="fadeLow" gradientUnits="userSpaceOnUse" x1="0" y1="625" x2="60" y2="720"><stop offset="0" stopColor="#000" /><stop offset="1" stopColor="#bbb" /></linearGradient>
      <linearGradient id="lineFade" gradientUnits="userSpaceOnUse" x1="289" y1="613" x2="1029" y2="704"><stop offset="0" stopColor="#fff" stopOpacity=".3" /><stop offset=".5" stopColor="#fff" stopOpacity=".45" /><stop offset=".75" stopColor="#fff" /></linearGradient>
      <mask id="far" maskUnits="userSpaceOnUse" x="0" y="200" width="1200" height="900"><rect x="0" y="200" width="1200" height="900" fill="url(#fade)" /></mask>
      <mask id="low" maskUnits="userSpaceOnUse" x="0" y="200" width="1200" height="900"><rect x="0" y="200" width="1200" height="900" fill="url(#fadeLow)" /></mask>
      <clipPath id="discs">{STEPS.map((s) => <path key={s} d={ring(s)} />)}</clipPath>
      <g id="plane" fill="none" stroke="#7b8c93">
        <path d={GRID.minor} strokeWidth="1" opacity=".65" /><path d={GRID.major} strokeWidth="1.700" opacity=".9" />
      </g>
    </defs>
    <rect x="-400" y="0" width="2200" height="1400" fill="url(#sky)" />
    <g mask="url(#far)"><use href="#plane" /></g>
    <g fill="#9a8f93" stroke="#9a8f93" strokeWidth=".6" opacity=".85" fontFamily="DejaVu Sans, sans-serif" fontWeight="700" textAnchor="middle">
      <text transform="matrix(-1.100 -.2 -.6 .55 898 866)" fontSize="24">2</text>
      <text transform="matrix(-1.100 -.2 -.6 .55 764 1017)" fontSize="28">3</text>
      <text transform="matrix(-1 -.15 -.9 .35 984 769)" fontSize="20">1</text>
      <text transform="matrix(-1 0 -.9 .2 1046 705)" fontSize="20">0</text>
    </g>
    {STEPS.map((s) => <path key={s} d={ring(s)} fill="url(#disc)" fillOpacity=".92" stroke="#273238" strokeWidth=".9" />)}
    <g clipPath="url(#discs)"><g mask="url(#low)"><use href="#plane" /></g></g>
    <line x1="289" y1="613" x2="1029.700" y2="703.700" stroke="url(#lineFade)" strokeWidth="1.400" />
    <g fontFamily="Liberation Mono, monospace" fontWeight="700" fontSize="12" fill="#2b635e" stroke="#2b635e" strokeWidth=".4" textAnchor="end">
      {[...STEPS, 0].map((s) => {
        const [x, y] = project(s, 0);
        return <text key={s} x={x - 2} y={y + 10}>{s}</text>;
      })}
    </g>
    {[...STEPS, 0].map((s) => {
      const [x, y] = project(s, 0);
      return <circle key={s} cx={x} cy={y} r="4" fill="#0a0ab4" />;
    })}
    <path d="M1018 724l2-4 2 2 1-3 2 3 2-2 1 4 1 1v4l-2 4h-5l-4-6z" fill="#fff" stroke="#222" strokeWidth=".8" />
    <g fontFamily="Liberation Sans, sans-serif" fontSize="13" fontWeight="700">
      <path d="M62 1024v-14" stroke="#1f3a1f" /><text x="62" y="1012" fill="#2ee02e">y</text><text x="50" y="1024" fill="#1c24c4">z</text><text x="56" y="1027" fill="#d02222">x</text>
    </g>
  </svg>
);

/* ---------- parameters ---------- */

const OpHeader = styled.div`flex: none; height: 31px; display: flex; align-items: center; padding: 0 3px 0 4px; border-bottom: 2px solid #111; background: #3a3a3a; border-top: 1px solid #4a4a4a;`;
const NameInput = styled.input`flex: 1; min-width: 0; height: 22px; margin: 0 3px 0 5px; padding: 0 3px; background: #121212; color: #e6e6e6; font-family: ${MONO}; font-size: 16px; line-height: 20px;`;
const ParmArea = styled.div`flex: none; height: 243px; display: grid; grid-template-columns: minmax(0, 1fr) 16px; background: #3a3a3a; padding: 0 3px; overflow: hidden;`;
const Parms = styled.div`overflow: hidden; padding-top: 3px;`;
const Row = styled.div<{ $h?: number; $inner?: boolean }>`
  display: grid; grid-template-columns: ${(p) => (p.$inner ? 144 : 138)}px minmax(0, 1fr); column-gap: ${(p) => (p.$inner ? 15 : 16)}px; align-items: center; height: ${(p) => p.$h ?? 29}px;
  padding-right: ${(p) => (p.$inner ? 4 : 0)}px;
  > label { text-align: right; font-size: 12px; color: #c8c8c8; white-space: nowrap; }
`;
const Cell = styled.div`display: flex; align-items: center; min-width: 0; gap: 1px;`;
const Field = styled.input`flex: 1; min-width: 0; height: 21px; background: #121212; color: #ececec; padding: 0 2px; font-family: ${MONO}; font-size: 16px; line-height: 20px;`;
const MenuBox = styled.div<{ $w: number }>`
  display: flex; width: ${(p) => p.$w}px; height: 24px; background: linear-gradient(#525252, #444); box-shadow: 0 0 0 1px #2a2a2a; font-size: 12px;
  select { appearance: none; flex: 1; min-width: 0; padding-left: 15px; }
`;
const PushBtn = styled.button`width: 119px; height: 24px; background: linear-gradient(#525252, #444); box-shadow: 0 0 0 1px #2a2a2a; font-size: 12px;`;
const Folder = styled.div`border: 1px solid #1a1a1a; border-top-color: #5a5a5a; padding-top: 2px; height: 161px;`;
const FolderTabs = styled.div`display: flex; height: 22px; margin-top: 4px;`;
const FolderTab = styled.button<{ $on?: boolean }>`
  padding: 0 ${(p) => (p.$on ? 7 : 8)}px; font-size: 12px; white-space: nowrap; border: 1px solid #191919; ${(p) => p.$on && css`border-bottom: 0; border-right: 0;`}
  background: ${(p) => (p.$on ? "linear-gradient(#4a4a4a, #3a3a3a)" : "linear-gradient(#484848, #363636)")};
`;
const Scroll = styled.div`display: flex; flex-direction: column; background: #1f1f1f; border-left: 1px solid #171717;`;
const Thumb = styled.div`
  height: 128px; background: linear-gradient(90deg, #404040, #565656); display: flex; align-items: center; justify-content: center;
  &::before { content: ""; width: 6px; height: 8px; background: repeating-linear-gradient(#181818 0 1px, transparent 1px 3px); }
`;
const ScrollBtn = styled.button<{ $dim?: boolean }>`height: 20px; background: ${(p) => (p.$dim ? "#303030" : "#4a4a4a")}; border: 1px solid #222; display: flex; align-items: center; justify-content: center;`;
const HSplit = styled.div`
  flex: none; height: 9px; background: linear-gradient(#585858, #404040); border-top: 1px solid #1b1b1b; display: flex; align-items: center; justify-content: center; gap: 21px;
  i { width: 22px; height: 4px; background: repeating-linear-gradient(90deg, #6f6f6f 0 1px, #3d3d3d 1px 3px); }
`;

const Select = ({ id, w, value }: { id: string; w: number; value: string }) => (
  <MenuBox $w={w}><select id={id}><option>{value}</option></select><UpDown /></MenuBox>
);

/* ---------- network ---------- */

const NetMenu = styled.div`flex: none; height: 29px; display: flex; align-items: center; background: linear-gradient(#3e3e3e, #343434); border-bottom: 1px solid #191919; padding-right: 2px;`;
const Net = styled.div`position: relative; flex: 1; min-height: 0; overflow: hidden; background: #2f2f2f; > svg { position: absolute; left: 0; top: 0; }`;
const NodeLabel = styled.span<{ $x: number; $y: number }>`position: absolute; left: ${(p) => p.$x}px; top: ${(p) => p.$y}px; font-size: 18px; line-height: 24px; color: #cbcbcb;`;
const Water = styled.span<{ $bold?: boolean }>`
  position: absolute; top: ${(p) => (p.$bold ? 14 : 10)}px; ${(p) => (p.$bold ? "right: 12px;" : "left: 307px;")} font-size: ${(p) => (p.$bold ? 25 : 22)}px; line-height: 32px; font-weight: ${(p) => (p.$bold ? 700 : 400)}; color: ${(p) => (p.$bold ? "#525252" : "#434343")};
`;

const Dot = ({ x, y }: { x: number; y: number }) => <circle cx={x} cy={y} r="4.300" fill="#b9b9b9" />;
const Graph = () => (
  <svg width="744" height="495" viewBox="1176 545 744 495" aria-hidden="true">
    <circle cx="1542" cy="737" r="42" fill="none" stroke="#714870" strokeWidth="6" />
    <path d="M1542 672c0 4-2 6-5 10l-18 25c-2 3-3 5-3 9" fill="none" stroke="#8b8a6a" strokeWidth="1.200" />
    <g>
      <rect x="1219" y="636" width="89" height="27" rx="5" fill="#cdcdcd" /><path d="M1232 637l-3 25M1245 637l-3 25M1286 637l-3 25M1298 637l-3 25" stroke="#8e8e8e" />
      <circle cx="1264" cy="649" r="10" fill="none" stroke="#7e8188" strokeWidth="2" /><Dot x={1264} y={670} />
    </g>
    <g>
      <rect x="1498" y="636" width="89" height="27" rx="5" fill="#cdcdcd" /><path d="M1511 637l-3 25M1524 637l-3 25M1565 637l-3 25M1577 637l-3 25" stroke="#8e8e8e" />
      <path d="M1535 638v19h20" stroke="#aaa" fill="none" /><path d="M1535 656l13-17" stroke="#d8868c" strokeWidth="3.400" /><path d="M1541 648q7 2 7 9" stroke="#c69a9c" fill="none" /><path d="M1535 656l13-17" stroke="#222" strokeWidth="2" /><Dot x={1542} y={670} />
    </g>
    <g>
      <Dot x={1516} y={716} /><Dot x={1533} y={716} /><Dot x={1551} y={716} /><Dot x={1569} y={716} />
      <path d="M1502 754h82q5 0 7-5l5-18-2-3-8 22h-86z" fill="#ecece8" stroke="#ecece8" />
      <path d="M1505 723h79q6 0 4 6l-5 18q-2 5-7 5h-76q-6 0-4-6l4-18q1-5 5-5z" fill="#cfcfcf" stroke="#e0c84a" strokeWidth="3.400" />
      <path d="M1505 723h79q6 0 4 6l-5 18q-2 5-7 5h-76q-6 0-4-6l4-18q1-5 5-5z" fill="none" stroke="#3b3414" strokeWidth="1" />
      <path d="M1515 726l-6 24M1527 726l-6 24" stroke="#8e8e8e" /><path d="M1566 725h12l-6 25h-12z" fill="#b04fbe" />
      <svg x="1529" y="725" width="25" height="24" viewBox="0 0 24 24">{ICONS.vop}</svg>
      <Dot x={1542} y={758} />
    </g>
    <g>
      <circle cx="1420" cy="876" r="43.500" fill="#44669f" /><circle cx="1420" cy="876" r="30" fill="#9276c9" />
      <rect x="1375" y="863" width="89" height="27" rx="5" fill="#ffa619" stroke="#d6881a" /><path d="M1454 864h7q3 1 3 4v16q0 4-3 5h-10z" fill="#00aef0" />
      <path d="M1388 864l-2 25M1400 864l-2 25M1441 864l-2 25M1453 864l-2 25" stroke="#b8741a" />
      <circle cx="1420" cy="876" r="8" fill="#d9923a" /><g fill="#b06a1e"><circle cx="1412" cy="868" r="2" /><circle cx="1422" cy="866" r="2" /><circle cx="1429" cy="870" r="2" /><circle cx="1413" cy="879" r="2" /><circle cx="1428" cy="881" r="2" /><circle cx="1419" cy="885" r="2" /><circle cx="1418" cy="874" r="2" /><circle cx="1423" cy="877" r="2" /></g>
      <path d="M1264 672c0 7 2 10 7 17l119 143c8 9 11 12 12 21" fill="none" stroke="#6283b4" strokeWidth="1.200" />
      <path d="M1542 760c0 10-4 15-14 22l-74 47c-10 7-15 12-17 24" fill="none" stroke="#9a9788" strokeWidth="1.200" strokeDasharray="2 2" />
      <Dot x={1402} y={855} /><Dot x={1437} y={855} /><Dot x={1420} y={896} />
    </g>
  </svg>
);

/* ---------- status ---------- */

const BottomEdge = styled.div`flex: none; height: 11px; background: linear-gradient(#585858, #3c3c3c); border-top: 1px solid #222; border-bottom: 1px solid #111; display: flex; align-items: center; padding: 0 2px; justify-content: space-between;`;
const Status = styled.footer`flex: none; height: 29px; background: #181818; display: flex; align-items: flex-start; justify-content: flex-end; position: relative;`;
const Progress = styled.span<{ $x: number; $w: number; $dim?: boolean }>`position: absolute; bottom: 0; left: ${(p) => p.$x}px; width: ${(p) => p.$w}px; height: ${(p) => (p.$dim ? 1 : 2)}px; background: ${(p) => (p.$dim ? "#777" : "#d8d8d8")};`;
const Update = styled.label`
  height: 27px; width: 116px; display: flex; margin-left: 6px; background: linear-gradient(#484848, #363636); font-size: 12px; select { appearance: none; flex: 1; min-width: 0; padding-left: 12px; }
`;
const AbcBtn = styled.button`width: 27px; height: 28px; font-size: 12px; color: #d8d8d8; font-family: "DejaVu Sans", sans-serif;`;

export default function App() {
  return (
    <>
      <Global />
      <Page>
        <TitleBar>
          <Icon name="houdini" size={14} /><Spacer />
          <WinBtn aria-label="Minimize"><svg width="9" height="9"><path d="M1 5.500h7" stroke="#222" /></svg></WinBtn>
          <WinBtn aria-label="Restore"><svg width="9" height="9"><path d="M.5 2.500h6v6h-6zM2.500 2V.5h6v6H7" fill="none" stroke="#222" /></svg></WinBtn>
          <WinBtn aria-label="Close"><svg width="9" height="9"><path d="M1 1l7 7M8 1L1 8" stroke="#222" /></svg></WinBtn>
        </TitleBar>
        <MenuBar>
          <Stow aria-label="Stow menu"><Tri $dir="up" $c="#0c0c0c" $s={3} /></Stow>
          <Menus $gap={11} $pad={8}>{["File", "Edit", "Render", "Assets", "Windows", "Help"].map((m) => <button key={m}>{m}</button>)}</Menus>
          <Spacer $w={26} />
          <Picker w={144} icon="layout" value="Build" label="Desktop" />
          <Spacer $w={4} />
          <Picker w={144} icon="radial" value="Main" label="Radial menu" />
          <Spacer />
          <Picker w={192} icon="clapper" value="Main" label="Take" />
          <IconBtn aria-label="Help" $w={38}><Icon name="help" size={19} /></IconBtn>
        </MenuBar>
        <ShelfRow>
          <ShelfSet><Stow aria-label="Stow shelf"><Tri $dir="up" $c="#0c0c0c" $s={3} /></Stow><Shelf tabs={createTabs} tools={createTools} /></ShelfSet>
          <Grip />
          <ShelfSet><Shelf tabs={lightTabs} tools={lightTools} pad={18} more /></ShelfSet>
        </ShelfRow>
        <Main>
          <Splitter><Tri $dir="right" $c="#888" $s={3} /><i /><Tri $dir="right" $c="#888" $s={3} /></Splitter>
          <Column>
            <TabStrip tabs={[["Scene View", 93], ["Animation Editor", 120], ["Render View", 99], ["Composite View", 116], ["Motion FX View", 111], ["Geometry Spreadsheet", 145]]} />
            <PathBar dimBack>
              <Spacer $w={12} />
              <IconBtn aria-label="Display mode" $menu="down"><Icon name="wirecube" size={20} /></IconBtn>
              <IconBtn aria-label="Shading" $menu="down"><Icon name="spheres" size={22} /></IconBtn>
              <IconBtn aria-label="Snapshot" $menu="down"><Icon name="square" size={20} /></IconBtn>
            </PathBar>
            <OpBar>
              <Stow aria-label="Stow toolbar" $w={9}><Tri $dir="up" $c="#0c0c0c" $s={3} /></Stow>
              <Spacer $w={3} />
              <IconBtn aria-label="View tool" $menu="down"><Icon name="camera" size={22} /></IconBtn>
              <OpName>View</OpName>
              <OpGroup>
                <IconBtn aria-label="Tumble" $menu="down"><Icon name="viewOrbit" size={22} /></IconBtn>
                <IconBtn aria-label="Pan" $menu="down"><Icon name="viewPan" size={22} /></IconBtn>
                <IconBtn aria-label="Dolly" $menu="down"><Icon name="viewDolly" size={22} /></IconBtn>
                <Pair>
                  <IconBtn aria-label="Lock camera" $on><Icon name="camera" size={20} /></IconBtn>
                  <IconBtn aria-label="Zoom frame"><Icon name="zoomFrame" size={18} /></IconBtn>
                </Pair>
                <IconBtn aria-label="Stop"><Icon name="stop" size={20} /></IconBtn>
              </OpGroup>
              <IconBtn aria-label="View options" $menu="down"><Icon name="viewOpts" size={20} /></IconBtn>
              <IconBtn aria-label="View help"><Icon name="help" size={20} /></IconBtn>
            </OpBar>
            <SceneBody>
              <Side>
                <SideHead aria-label="Stow tools"><Tri $dir="left" $c="#0c0c0c" $s={4} /></SideHead>
                <SideSet $boxed $mt={8}>
                  <Buttons h={27} size={22} items={[["primCone", "Objects", false, true], ["primGrid", "Components", true, true], ["primCube", "Dynamics", false, true]]} />
                </SideSet>
                <SideSet $mt={14}>
                  <Buttons h={31} w={29} size={24} items={[["arrow", "Select", false, true], ["lockTool", "Secure selection", true]]} />
                  <Buttons h={32} w={29} size={25} items={[["move", "Move"], ["rotate", "Rotate"], ["scale", "Scale"], ["pose", "Pose"], ["handle", "Handles", false, true]]} />
                </SideSet>
                <SideSet $mt={6}>
                  <Buttons h={32} w={29} size={25} items={[["magGrid", "Snap to grid", false, true], ["magCurve", "Snap to curve", false, true], ["magPoint", "Snap to point", false, true], ["magnet", "Snap", false, true]]} />
                </SideSet>
                <SideSet $mt={9}>
                  <Buttons h={31} w={29} size={25} items={[["camera", "View", true, true], ["renderRegion", "Render region"], ["lens", "Flipbook", false, true]]} />
                </SideSet>
                <Spacer />
                <Buttons h={28} items={[["cutter", "Brush", false, true], ["reel", "Record", false, true]]} size={21} />
                <Spacer $h={4} />
              </Side>
              <Viewport>
                <Scene />
                <CamMenus>
                  <Pill>Persp<Tri $c="#e8e8e8" $s={2} /></Pill>
                  <Pill>No cam<Tri $c="#161616" $s={2} /></Pill>
                </CamMenus>
                <Hint>Left mouse tumbles. Middle pans. Right dollies. Ctrl+Alt+Left box-zooms. Ctrl+Right zooms. Spacebar-Ctrl-Left tilts. Hold L for alternate tumble, dolly, and zoom.</Hint>
                <Edition>Indie Edition</Edition>
              </Viewport>
              <Side>
                <SideHead $end aria-label="Stow display bar"><Tri $dir="right" $c="#0c0c0c" $s={4} /></SideHead>
                <SideSet $mt={2}>
                  <Buttons h={28} w={25} size={20} items={[["refPlane", "Reference plane", true, true], ["refC", "Construction plane", false, true], ["lock", "Lock"], ["bulbX", "No lighting"], ["headlight", "Headlight", false, true], ["bulb", "Normal lighting", true, true], ["bulbPlus", "High quality lighting", false, true], ["bulbDisk", "Shadows", false, true]]} />
                </SideSet>
                <SideSet $mt={4}>
                  <Buttons h={28} w={25} size={20} items={[["checker", "Materials", true, true], ["glasses", "Display objects", false, true], ["glassesPlay", "Display playback", false, true]]} />
                </SideSet>
                <SideSet $mt={4} $gap={1}>
                  <Buttons h={28} w={25} size={20} items={[["pointDisp", "Points", true], ["pointNormal", "Point normals"], ["pointTrail", "Point trails"], ["pointNum", "Point numbers"], ["primNormal", "Primitive normals"], ["primNum", "Primitive numbers"]]} />
                </SideSet>
                <SideSet>
                  <Buttons h={28} w={25} size={20} items={[["hull", "Hulls"], ["uvCheck", "UV"], ["axisTri", "Vertices"], ["onion", "Onion skin"]]} />
                  <AbcBtn>abc</AbcBtn>
                  <Buttons h={28} w={25} size={20} items={[["bgImage", "Background", true]]} />
                </SideSet>
                <SideSet $mt={15}>
                  <Buttons h={28} w={25} size={20} items={[["mapPin", "Markers", true, true]]} />
                </SideSet>
                <Spacer />
                <Buttons h={28} w={25} size={20} items={[["infoIcon", "Info"], ["quad", "Layout", true], ["eye", "Display options", false, true]]} />
              </Side>
            </SceneBody>
          </Column>
          <Splitter><Tri $dir="left" $c="#888" $s={3} /><i /><Tri $dir="right" $c="#888" $s={3} /></Splitter>
          <Column>
            <TabStrip italic tabs={[["attribvop12", 96], ["Take List", 84], ["Performance Monitor", 139]]} />
            <PathBar />
            <OpHeader>
              <IconBtn aria-label="Operator" $w={24} $menu="down"><Icon name="vop" size={22} /></IconBtn>
              <OpName>Attribute VOP</OpName>
              <NameInput aria-label="Node name" defaultValue="attribvop12" />
              <IconBtn aria-label="Settings" $menu="down"><Icon name="gear" size={20} /></IconBtn>
              <IconBtn aria-label="Houdini" $menu="down" $w={27}><Icon name="hlogo" size={20} /></IconBtn>
              <IconBtn aria-label="Search" $w={27}><Icon name="search" size={20} /></IconBtn>
              <IconBtn aria-label="Info" $w={27}><Icon name="infoIcon" size={20} /></IconBtn>
              <IconBtn aria-label="Help" $w={27}><Icon name="help" size={20} /></IconBtn>
            </OpHeader>
            <ParmArea>
              <Parms>
                <Row $h={28}><label htmlFor="group">Group</label><Cell><Field id="group" /><DropBtn $w={20} $h={21} aria-label="Group list"><Tri $c="#777" $s={3} /></DropBtn><IconBtn aria-label="Pick group" $w={28}><Icon name="wedge" size={18} /></IconBtn></Cell></Row>
                <Row><label htmlFor="gtype">Group Type</label><Select id="gtype" w={142} value="Guess from Group" /></Row>
                <Row><label htmlFor="over">Run Over</label><Select id="over" w={141} value="Points" /></Row>
                <FolderTabs><FolderTab $on>Vex Setup</FolderTab><FolderTab>Attribute Bindings</FolderTab></FolderTabs>
                <Folder>
                  <Row $inner><label htmlFor="src">Vex Source</label><Select id="src" w={79} value="Myself" /></Row>
                  <Row $inner $h={26}><label htmlFor="comp">Compiler</label><Field id="comp" defaultValue="vcc -q $VOP_INCLUDEPATH -o $VOP_OBJECTFILE -e $VOP_ERRORFILE $VOP_SOURCEFILE" /></Row>
                  <Row $inner $h={26}><span /><PushBtn>Force Compile</PushBtn></Row>
                  <Row $inner $h={34}><label htmlFor="eval">Evaluation Node Path</label><Cell><Field id="eval" /><IconBtn aria-label="Jump to operator" $w={30}><Icon name="jump" size={17} /></IconBtn><IconBtn aria-label="Choose operator" $w={23}><Icon name="chooser" size={22} /></IconBtn></Cell></Row>
                  <Row $inner $h={21}><label htmlFor="exp">Export Parameters</label><Field id="exp" defaultValue="*" /></Row>
                </Folder>
              </Parms>
              <Scroll><Thumb /><Spacer /><ScrollBtn $dim aria-label="Scroll up"><Tri $dir="up" $c="#444" $s={3} /></ScrollBtn><ScrollBtn aria-label="Scroll down"><Tri $c="#8a8a8a" $s={3} /></ScrollBtn></Scroll>
            </ParmArea>
            <HSplit><Tri $dir="up" $c="#888" $s={2} /><i /><Tri $c="#888" $s={3} /></HSplit>
            <TabStrip italic tabs={[["/obj/geo1", 88], ["Tree View", 88], ["Material Palette", 115], ["Asset Browser", 107]]} />
            <PathBar />
            <NetMenu>
              <Stow aria-label="Stow network menu"><Tri $dir="up" $c="#0c0c0c" $s={3} /></Stow>
              <Menus $gap={17} $pad={10}>{["Add", "Edit", "Go", "View", "Tools", "Layout", "Help"].map((m) => <button key={m}>{m}</button>)}</Menus>
              <Spacer />
              <IconBtn aria-label="Tools" $w={28}><Icon name="tools" size={20} /></IconBtn>
              <IconBtn aria-label="Tree" $w={27}><Icon name="tree" size={18} /></IconBtn>
              <IconBtn aria-label="List" $w={27}><Icon name="list" size={20} /></IconBtn>
              <Spacer $w={18} />
              <IconBtn aria-label="Color palette" $w={28}><Icon name="palette" size={19} /></IconBtn>
              <IconBtn aria-label="Shape palette" $w={28}><Icon name="shapesPal" size={19} /></IconBtn>
              <Spacer $w={18} />
              <IconBtn aria-label="Network box" $w={27}><Icon name="netbox" size={20} /></IconBtn>
              <IconBtn aria-label="Sticky note" $w={27}><Icon name="sticky" size={20} /></IconBtn>
              <IconBtn aria-label="Background image" $w={27}><Icon name="bgAdd" size={21} /></IconBtn>
              <IconBtn aria-label="Asset" $w={28}><Icon name="crate" size={20} /></IconBtn>
              <Spacer $w={18} />
              <IconBtn aria-label="Find" $w={28}><Icon name="search" size={20} /></IconBtn>
              <IconBtn aria-label="Display" $w={24}><Icon name="eye" size={20} /></IconBtn>
            </NetMenu>
            <Net>
              <Graph />
              <Water>Indie Edition</Water>
              <Water $bold>Geometry</Water>
              <NodeLabel $x={140} $y={90}>circle7</NodeLabel>
              <NodeLabel $x={419} $y={90}>line9</NodeLabel>
              <NodeLabel $x={422} $y={178}>attribvop12</NodeLabel>
              <NodeLabel $x={296} $y={318}>copytopoints10</NodeLabel>
            </Net>
          </Column>
        </Main>
        <BottomEdge><Tri $dir="up" $c="#0c0c0c" $s={3} /><Tri $dir="up" $c="#0c0c0c" $s={3} /></BottomEdge>
        <Status>
          <Progress $x={36} $w={258} /><Progress $dim $x={957} $w={34} />
          <IconBtn aria-label="Cook status" $w={30}><Icon name="brain" size={22} /></IconBtn>
          <IconBtn aria-label="Refresh" $w={32}><Icon name="refresh" size={18} /></IconBtn>
          <Update><select aria-label="Update mode"><option>Auto Update</option></select><UpDown /></Update>
        </Status>
      </Page>
    </>
  );
}
